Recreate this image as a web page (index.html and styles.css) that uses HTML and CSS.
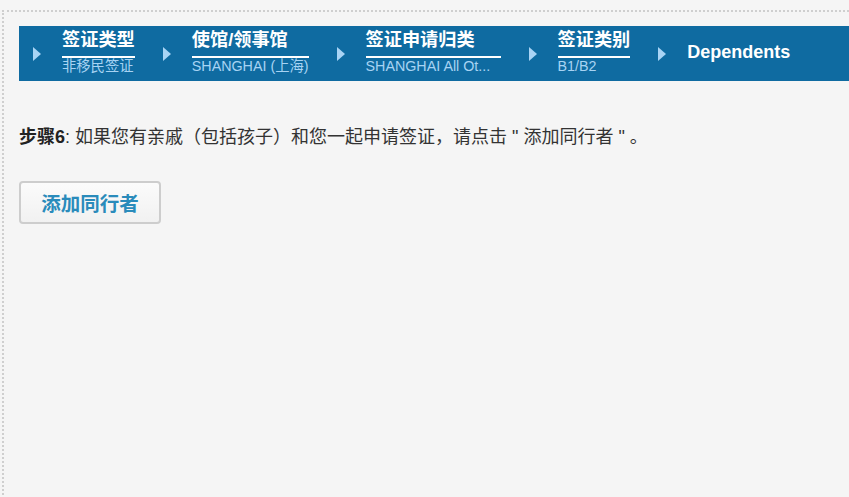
FILE: index.html
```html
<!DOCTYPE html>
<html lang="zh-CN">
<head>
<meta charset="utf-8">
<title>Dependents</title>
<link rel="stylesheet" href="styles.css">
</head>
<body>
<div class="frame">
  <nav class="steps">
    <div class="step">
      <span class="arrow"></span>
      <div class="step-text">
        <div class="step-title">签证类型</div>
        <div class="step-sub">非移民签证</div>
      </div>
    </div>
    <div class="step">
      <span class="arrow"></span>
      <div class="step-text">
        <div class="step-title">使馆/领事馆</div>
        <div class="step-sub">SHANGHAI (上海)</div>
      </div>
    </div>
    <div class="step">
      <span class="arrow"></span>
      <div class="step-text fixed">
        <div class="step-title">签证申请归类</div>
        <div class="step-sub">SHANGHAI All Ot...</div>
      </div>
    </div>
    <div class="step">
      <span class="arrow"></span>
      <div class="step-text">
        <div class="step-title">签证类别</div>
        <div class="step-sub">B1/B2</div>
      </div>
    </div>
    <div class="step current">
      <span class="arrow"></span>
      <div class="step-current">Dependents</div>
    </div>
  </nav>

  <p class="instruction"><strong>步骤6</strong>: 如果您有亲戚（包括孩子）和您一起申请签证，请点击 " 添加同行者 " 。</p>

  <button class="add-btn" type="button">添加同行者</button>
</div>
</body>
</html>
```
FILE: styles.css
```css
html, body {
  margin: 0;
  padding: 0;
  background: #f5f5f5;
  height: 100%;
  overflow: hidden;
}

body {
  font-family: "Liberation Sans", Arial, "Noto Sans CJK SC", sans-serif;
  color: #333;
}

.frame {
  margin: 10px 0 0 2px;
  border-top: 2px dotted #cfcfcf;
  border-left: 2px dotted #cfcfcf;
  padding: 14px 0 0 15px;
  min-height: 600px;
}

.steps {
  display: flex;
  align-items: stretch;
  height: 55px;
  background: #0f6ba1;
}

.step {
  display: flex;
  align-items: center;
  padding: 0 14px 0 14px;
}

.arrow {
  width: 0;
  height: 0;
  border-top: 7px solid transparent;
  border-bottom: 7px solid transparent;
  border-left: 8px solid #a9d4f5;
  margin-right: 21px;
}

.step-text {
  display: flex;
  flex-direction: column;
  align-self: flex-start;
  padding-top: 3px;
  max-width: 135px;
}

.step-text.fixed {
  width: 135px;
}

.step-title {
  font-size: 18.2px;
  font-weight: bold;
  color: #fff;
  line-height: 22px;
  padding-bottom: 5px;
  border-bottom: 2px solid #fff;
  white-space: nowrap;
}

.step-sub {
  font-size: 14.3px;
  line-height: 17px;
  color: #a7d3f3;
  white-space: nowrap;
}

.step-current {
  font-size: 18px;
  font-weight: bold;
  color: #fff;
  line-height: 22px;
  margin-top: -3px;
}

.instruction {
  margin: 44px 0 0;
  font-size: 18px;
  line-height: 24px;
  color: #333;
}

.instruction strong {
  color: #222;
}

.add-btn {
  margin-top: 32px;
  width: 142px;
  height: 43px;
  border: 2px solid #cdcdcd;
  border-radius: 4px;
  background: linear-gradient(#fbfbfb, #f1f1f1);
  font-family: "Liberation Sans", Arial, "Noto Sans CJK SC", sans-serif;
  font-size: 19.5px;
  font-weight: bold;
  color: #2a8bbb;
  padding: 0;
  cursor: pointer;
}
```
